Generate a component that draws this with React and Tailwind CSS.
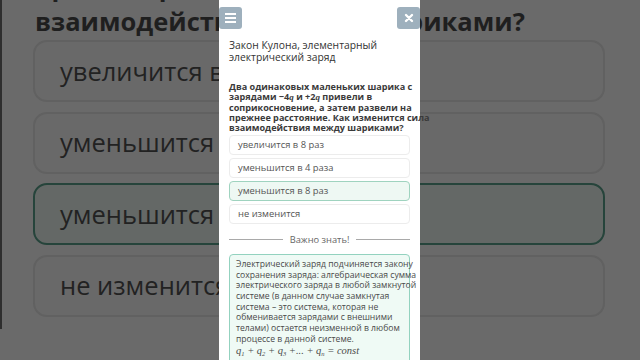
import React from "react";

const bgCards = [
  { t: "увеличится в 8 раз", sel: false },
  { t: "уменьшится в 4 раза", sel: false },
  { t: "уменьшится в 8 раз", sel: true },
  { t: "не изменится", sel: false },
];

function Q() {
  return <span className="italic font-['Liberation_Serif',serif]">q</span>;
}

export default function App() {
  return (
    <div className="relative w-[640px] h-[360px] overflow-hidden bg-[#6a6a6a] font-['Open_Sans',sans-serif]">
      {/* blurred zoomed backdrop */}
      <div className="h-full border-l-2 border-[#2e2e2e] pl-[31px]">
        <div className="-mt-[31px] pl-[2px] text-[25.5px] font-bold leading-[35px] text-[#1f1f1f] whitespace-nowrap">
          <div>прежнее расстояние. Как изменится сила</div>
          <div>взаимодействия между шариками?</div>
        </div>
        <div className="mt-[1px] w-[572px] flex flex-col gap-[9.5px]">
          {bgCards.map((c) => (
            <div
              key={c.t}
              className={
                c.sel
                  ? "h-[62px] rounded-[14px] border-2 border-[#26443b] bg-[#646866] flex items-center pl-[25px] text-[25.5px] text-[#222] whitespace-nowrap"
                  : "h-[62px] rounded-[14px] border-2 border-[#616161] bg-[#696969] flex items-center pl-[25px] text-[25.5px] text-[#222] whitespace-nowrap"
              }
            >
              {c.t}
            </div>
          ))}
        </div>
      </div>

      {/* phone screen */}
      <div className="absolute left-[219px] top-0 w-[201px] h-[360px] bg-white flex flex-col">
        <div className="ml-[30px] w-[86px] h-[4px] rounded-b-[6px] bg-[#e6e8ec]" />
        <div className="mt-[7px] flex justify-between">
          <div className="w-[23px] h-[22px] rounded-[3px] bg-[#9eb0bd] flex flex-col items-center justify-center gap-[2px]">
            <div className="w-[11px] h-[2px] bg-white" />
            <div className="w-[11px] h-[2px] bg-white" />
            <div className="w-[11px] h-[2px] bg-white" />
          </div>
          <div className="w-[23px] h-[22px] rounded-[3px] bg-[#9eb0bd] flex items-center justify-center">
            <svg width="10" height="10" viewBox="0 0 10 10">
              <path d="M2 2 L8 8 M8 2 L2 8" stroke="white" strokeWidth="2.4" strokeLinecap="round" />
            </svg>
          </div>
        </div>

        <div className="px-[10px]">
          <div className="mt-[10px] text-[10.3px] leading-[12.4px] text-[#333] whitespace-nowrap">
            <div>Закон Кулона, элементарный</div>
            <div>электрический заряд</div>
          </div>

          <div className="mt-[18px] text-[9.1px] font-bold leading-[10.4px] text-[#3a3a3a] whitespace-nowrap">
            <div>Два одинаковых маленьких шарика с</div>
            <div>
              зарядами −4<Q /> и +2<Q /> привели в
            </div>
            <div>соприкосновение, а затем развели на</div>
            <div>прежнее расстояние. Как изменится сила</div>
            <div>взаимодействия между шариками?</div>
          </div>

          <div className="mt-[1px] flex flex-col gap-[3px]">
            {bgCards.map((c) => (
              <div
                key={c.t}
                className={
                  c.sel
                    ? "h-[20px] rounded-[4px] border border-[#9fd3bf] bg-[#eef8f3] flex items-center pl-[8px] text-[9.4px] text-[#555] whitespace-nowrap"
                    : "h-[20px] rounded-[4px] border border-[#ececec] bg-white flex items-center pl-[8px] text-[9.4px] text-[#555] whitespace-nowrap"
                }
              >
                {c.t}
              </div>
            ))}
          </div>

          <div className="mt-[10px] flex items-center gap-[7px]">
            <div className="flex-1 h-px bg-[#a9a9a9]" />
            <div className="text-[9.3px] text-[#666] leading-[12px]">Важно знать!</div>
            <div className="flex-1 h-px bg-[#a9a9a9]" />
          </div>

          <div className="mt-[8px] rounded-[4px] border border-[#93d2bf] bg-[#effaf5] pl-[6px] pt-[4px] pb-[6px] text-[8.6px] leading-[10.7px] text-[#4a4a4a] whitespace-nowrap">
            <div>Электрический заряд подчиняется закону</div>
            <div>сохранения заряда: алгебраическая сумма</div>
            <div>электрического заряда в любой замкнутой</div>
            <div>системе (в данном случае замкнутая</div>
            <div>система – это система, которая не</div>
            <div>обменивается зарядами с внешними</div>
            <div>телами) остается неизменной в любом</div>
            <div>процессе в данной системе.</div>
            <div className="mt-[2px] italic font-['Liberation_Serif',serif] text-[10.5px]">
              q<sub className="text-[6.5px]">1</sub> + q<sub className="text-[6.5px]">2</sub> + q<sub className="text-[6.5px]">3</sub> +... + q<sub className="text-[6.5px]">n</sub> = const
            </div>
          </div>
        </div>
      </div>
    </div>
  );
}
